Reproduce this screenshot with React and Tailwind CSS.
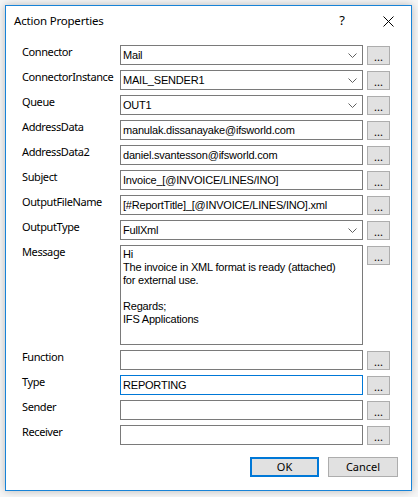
import React from "react";

const rows = [
  { label: "Connector", value: "Mail", combo: true },
  { label: "ConnectorInstance", value: "MAIL_SENDER1", combo: true },
  { label: "Queue", value: "OUT1", combo: true },
  { label: "AddressData", value: "manulak.dissanayake@ifsworld.com" },
  { label: "AddressData2", value: "daniel.svantesson@ifsworld.com" },
  { label: "Subject", value: "Invoice_[@INVOICE/LINES/INO]" },
  { label: "OutputFileName", value: "[#ReportTitle]_[@INVOICE/LINES/INO].xml" },
  { label: "OutputType", value: "FullXml", combo: true },
];

const bottomRows = [
  { label: "Function", value: "" },
  { label: "Type", value: "REPORTING", focused: true },
  { label: "Sender", value: "" },
  { label: "Receiver", value: "" },
];

const messageLines = [
  "Hi",
  "The invoice in XML format is ready (attached)",
  "for external use.",
  "",
  "Regards;",
  "IFS Applications",
];

function DotsButton() {
  return (
    <div className="w-[23px] h-[19px] mt-[1px] border border-[#adadad] bg-[#e1e1e1] flex items-end justify-center text-[11px] leading-[15px] text-black">
      ...
    </div>
  );
}

function Chevron() {
  return (
    <svg width="9" height="5" viewBox="0 0 9 5" className="mr-[5px]">
      <polyline points="0.5,0.5 4.5,4.5 8.5,0.5" fill="none" stroke="#606060" strokeWidth="1" />
    </svg>
  );
}

function Row({ label, value, combo, focused }) {
  return (
    <div className="flex h-[20px]">
      <div className="w-[98px] text-[11px] tracking-[-0.4px] leading-[14px] text-black whitespace-nowrap">{label}</div>
      <div
        className={`w-[243px] h-[20px] border ${focused ? "border-[#0078d7]" : "border-[#7a7a7a]"} bg-white flex items-center justify-between pl-[2px] font-['Liberation_Sans',Arial,sans-serif] text-[11px] tracking-[-0.2px] text-black whitespace-nowrap overflow-hidden`}
      >
        <span>{value}</span>
        {combo && <Chevron />}
      </div>
      <div className="ml-[4px]">
        <DotsButton />
      </div>
    </div>
  );
}

export default function App() {
  return (
    <div className="w-[418px] h-[497px] bg-[#f6f6f6] pt-[5px] pl-[5px] font-['Noto_Sans',sans-serif]">
      <div className="w-[407px] h-[486px] border border-[#1883d7] bg-white shadow-[0_0_8px_rgba(0,0,0,0.25)] flex flex-col">
        {/* title bar */}
        <div className="h-[30px] flex items-center pl-[8px] text-[11.5px] tracking-[-0.2px] text-black">
          <span className="flex-1">Action Properties</span>
          <span className="w-[46px] text-center text-[13px]">?</span>
          <span className="w-[46px] flex justify-center">
            <svg width="11" height="11" viewBox="0 0 11 11">
              <path d="M0.5 0.5 L10.5 10.5 M10.5 0.5 L0.5 10.5" stroke="#000" strokeWidth="1" />
            </svg>
          </span>
        </div>

        <div className="pl-[16px] pt-[9px] flex flex-col gap-[5px]">
          {rows.map((r) => (
            <Row key={r.label} {...r} />
          ))}

          {/* message */}
          <div className="flex h-[100px]">
            <div className="w-[98px] text-[11px] tracking-[-0.4px] leading-[14px] text-black">Message</div>
            <div className="w-[243px] h-[100px] border border-[#7a7a7a] bg-white pl-[2px] pt-[2px] font-['Liberation_Sans',Arial,sans-serif] text-[11px] tracking-[-0.2px] leading-[13px] text-black">
              {messageLines.map((l, i) => (
                <div key={i} className="h-[13px]">{l}</div>
              ))}
            </div>
            <div className="ml-[4px]">
              <DotsButton />
            </div>
          </div>

          {bottomRows.map((r) => (
            <Row key={r.label} {...r} />
          ))}
        </div>

        <div className="flex justify-end gap-[9px] pr-[13px] mt-[12px] text-[11px]">
          <div className="w-[69px] h-[20px] border-2 border-[#0078d7] bg-[#e1e1e1] flex items-center justify-center">OK</div>
          <div className="w-[70px] h-[20px] border border-[#adadad] bg-[#e1e1e1] flex items-center justify-center">Cancel</div>
        </div>
      </div>
    </div>
  );
}
